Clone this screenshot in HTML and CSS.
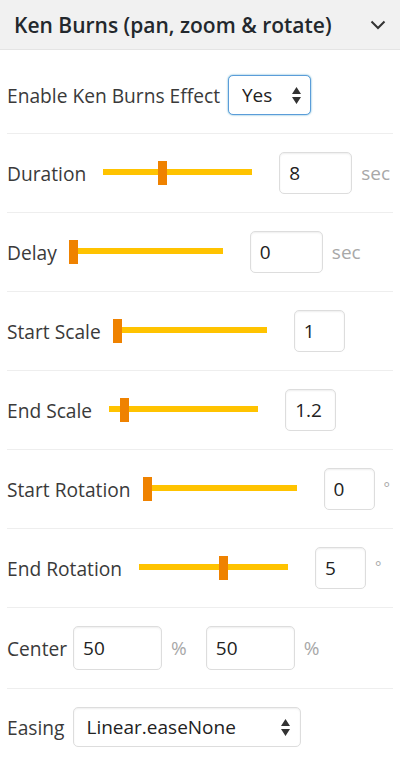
FILE: index.html
```html
<!DOCTYPE html>
<html lang="en">
<head>
    <meta charset="UTF-8">
    <meta name="viewport" content="width=device-width, initial-scale=1.0">
    <title>Ken Burns</title>
    <link rel="stylesheet" href="styles.css">
</head>

<body>
    <div class="panel">
        <div class="panel-head">
            <h2>Ken Burns (pan, zoom &amp; rotate)</h2>
            <svg class="chevron" width="16" height="10" viewBox="0 0 16 10">
                <path d="M1.5 1.5 L8 8 L14.5 1.5" fill="none" stroke="#333" stroke-width="2"/>
            </svg>
        </div>

        <div class="fields">
            <div class="row">
                <label>Enable Ken Burns Effect</label>
                <div class="select-wrap focused yes">
                    <select>
                        <option>Yes</option>
                        <option>No</option>
                    </select>
                    <svg class="arrows" width="9" height="17" viewBox="0 0 9 17">
                        <path d="M4.5 0 L9 7 L0 7 Z M0 10 L9 10 L4.5 17 Z" fill="#333"/>
                    </svg>
                </div>
            </div>

            <!-- sliders -->
            <div class="row">
                <label>Duration</label>
                <div class="slider"><div class="track"></div><div class="thumb" style="left: 40%"></div></div>
                <input type="text" class="num wide" value="8">
                <span class="unit">sec</span>
            </div>
            <div class="row">
                <label>Delay</label>
                <div class="slider"><div class="track"></div><div class="thumb" style="left: 0%"></div></div>
                <input type="text" class="num wide" value="0">
                <span class="unit">sec</span>
            </div>
            <div class="row">
                <label>Start Scale</label>
                <div class="slider"><div class="track"></div><div class="thumb" style="left: 0%"></div></div>
                <input type="text" class="num" value="1">
            </div>
            <div class="row">
                <label>End Scale</label>
                <div class="slider"><div class="track"></div><div class="thumb" style="left: 10%"></div></div>
                <input type="text" class="num" value="1.2">
            </div>
            <div class="row">
                <label>Start Rotation</label>
                <div class="slider"><div class="track"></div><div class="thumb" style="left: 0%"></div></div>
                <input type="text" class="num" value="0">
                <span class="unit deg">°</span>
            </div>
            <div class="row">
                <label>End Rotation</label>
                <div class="slider"><div class="track"></div><div class="thumb" style="left: 57%"></div></div>
                <input type="text" class="num" value="5">
                <span class="unit deg">°</span>
            </div>

            <div class="row">
                <label>Center</label>
                <input type="text" class="num center" value="50">
                <span class="unit pct">%</span>
                <input type="text" class="num center" value="50">
                <span class="unit">%</span>
            </div>
            <div class="row">
                <label>Easing</label>
                <div class="select-wrap easing">
                    <select>
                        <option>Linear.easeNone</option>
                        <option>Power1.easeIn</option>
                        <option>Power1.easeOut</option>
                    </select>
                    <svg class="arrows" width="9" height="17" viewBox="0 0 9 17">
                        <path d="M4.5 0 L9 7 L0 7 Z M0 10 L9 10 L4.5 17 Z" fill="#333"/>
                    </svg>
                </div>
            </div>
        </div>
    </div>
</body>
</html>
```

FILE: styles.css
```css
body {
    margin: 0;
    font-family: "Open Sans", Arial, sans-serif;
    background-color: #fff;
    color: #3a3a3a;
}
.panel-head {
    display: flex;
    align-items: center;
    justify-content: space-between;
    height: 49px;
    padding: 0 14px 0 14px;
    background-color: #f1f1f1;
    border-bottom: 1px solid #e4e4e4;
}
.panel-head h2 {
    margin: 0;
    font-size: 21px;
    font-weight: 600;
    color: #23282d;
}
.chevron {
    display: block;
}
.fields {
    padding: 7px 7px 0;
}
.row {
    display: flex;
    align-items: center;
    gap: 8px;
    padding: 18px 0;
    border-bottom: 1px solid #eeeeee;
}
.row:last-child {
    border-bottom: none;
}
.row label {
    font-size: 19.2px;
    white-space: nowrap;
}
.select-wrap {
    position: relative;
    height: 40px;
}
.select-wrap select {
    appearance: none;
    -webkit-appearance: none;
    height: 40px;
    width: 100%;
    padding: 0 0 0 13px;
    font-family: "Open Sans", Arial, sans-serif;
    font-size: 19px;
    color: #222;
    background: #fff;
    border: 1px solid #ddd;
    border-radius: 5px;
    box-shadow: inset 0 1px 2px rgba(0, 0, 0, 0.07);
}
.select-wrap.focused select {
    border-color: #5b9dd9;
    box-shadow: 0 0 2px rgba(30, 140, 190, 0.8);
}
.select-wrap .arrows {
    position: absolute;
    right: 10px;
    top: 12px;
    pointer-events: none;
}
.yes {
    width: 83px;
}
.easing {
    width: 228px;
}
.easing .arrows {
    right: 11px;
}
.slider {
    position: relative;
    flex: none;
    width: 149px;
    height: 24px;
    margin: 0 19px 0 9px;
}
.track {
    position: absolute;
    left: 0;
    right: 0;
    top: 8px;
    height: 6px;
    background-color: #ffc300;
}
.thumb {
    position: absolute;
    top: 0;
    width: 9px;
    height: 24px;
    margin-left: -4.5px;
    background-color: #ef8200;
}
.num {
    box-sizing: border-box;
    flex: none;
    width: 51px;
    height: 42px;
    padding: 0 0 0 9px;
    font-family: "Open Sans", Arial, sans-serif;
    font-size: 19px;
    color: #222;
    border: 1px solid #ddd;
    border-radius: 5px;
    box-shadow: inset 0 1px 2px rgba(0, 0, 0, 0.07);
}
.num.wide {
    width: 73px;
}
.num.center {
    width: 89px;
    height: 44px;
}
.row .center:first-of-type {
    margin-left: -2px;
}
.unit {
    font-size: 19px;
    color: #a8a8a8;
    margin-left: 1px;
}
.unit.deg {
    font-size: 15px;
    align-self: flex-start;
    margin-top: 9px;
}
.unit.pct {
    margin-right: 11px;
}
```
